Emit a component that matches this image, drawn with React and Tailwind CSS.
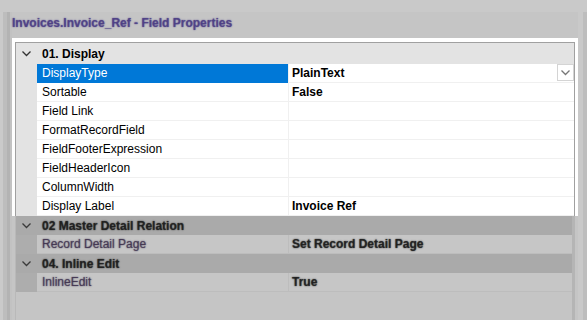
import React from 'react';

const ROWS = [
  { name: 'DisplayType', value: 'PlainText', selected: true, dropdown: true },
  { name: 'Sortable', value: 'False' },
  { name: 'Field Link', value: '' },
  { name: 'FormatRecordField', value: '' },
  { name: 'FieldFooterExpression', value: '' },
  { name: 'FieldHeaderIcon', value: '' },
  { name: 'ColumnWidth', value: '' },
  { name: 'Display Label', value: 'Invoice Ref' },
];

const DIM = [
  { category: '02 Master Detail Relation', rows: [{ name: 'Record Detail Page', value: 'Set Record Detail Page' }] },
  { category: '04. Inline Edit', rows: [{ name: 'InlineEdit', value: 'True' }] },
];

function Chevron({ color = '#333' }) {
  return (
    <svg width="9" height="6" viewBox="0 0 9 6" fill="none">
      <polyline points="0.5,0.5 4.5,4.5 8.5,0.5" stroke={color} strokeWidth="1.3" />
    </svg>
  );
}

export default function App() {
  return (
    <div className="w-[587px] h-[320px] bg-[#c5c5c5] overflow-hidden flex flex-col font-['Segoe_UI','Liberation_Sans',sans-serif] text-[12px]">
      {/* title band */}
      <div className="h-[12px] bg-[#c9c9c9]" />
      <div className="flex flex-1">
        {/* left strip */}
        <div className="w-[12px] flex">
          <div className="w-[3px] bg-[#cacaca]" />
          <div className="w-[4px] bg-[#bdbdbd]" />
          <div className="w-[3px] bg-[#b3b3b3]" />
          <div className="w-[2px] bg-[#c2c2c2]" />
        </div>

        <div className="w-[566px] flex flex-col">
          <div className="h-[26px] flex items-center">
            <span className="font-bold text-[#4a3c84]/80 [text-shadow:0_0_1.5px_#4a3c84] text-[12px] -mt-[4px]">Invoices.Invoice_Ref - Field Properties</span>
          </div>

          {/* spotlight */}
          <div className="bg-white pt-[4px] px-[3px]">
            <div className="border-t border-x border-[#a0a0a0]">
              <div className="h-[21px] bg-[#e3e3e3] flex items-center">
                <div className="w-[21px] flex justify-center"><Chevron /></div>
                <span className="pl-[5px] font-bold text-black">01. Display</span>
              </div>
              {ROWS.map(r => (
                <div key={r.name} className="h-[19px] flex">
                  <div className="w-[21px] bg-[#e3e3e3]" />
                  <div className={`w-[251px] flex items-center pl-[5px] border-b ${r.selected ? 'bg-[#0078d7] text-white border-[#0078d7]' : 'text-black border-[#f0f0f0]'}`}>
                    {r.name}
                  </div>
                  <div className="w-px bg-[#f0f0f0]" />
                  <div className="flex-1 flex items-center justify-between pl-[3px] border-b border-[#f0f0f0] font-bold text-black">
                    <span>{r.value}</span>
                    {r.dropdown && (
                      <div className="w-[17px] h-[17px] border border-[#d4d4d4] bg-white flex items-center justify-center mb-px">
                        <Chevron color="#777" />
                      </div>
                    )}
                  </div>
                </div>
              ))}
            </div>
          </div>

          {/* dimmed rest */}
          <div className="flex-1 px-[3px] flex">
            <div className="flex-1 flex flex-col border-l border-[#b9b9b9]">
              {DIM.map(g => (
                <div key={g.category}>
                  <div className="h-[19px] bg-[#aaaaaa] flex items-center">
                    <div className="w-[21px] flex justify-center"><Chevron color="#3a3a3a" /></div>
                    <span className="pl-[5px] font-bold text-[#1a1a1a]/80 [text-shadow:0_0_1.5px_#1a1a1a]">{g.category}</span>
                  </div>
                  {g.rows.map(r => (
                    <div key={r.name} className="h-[19px] flex">
                      <div className="w-[21px] bg-[#adadad]" />
                      <div className="w-[251px] bg-[#c6c6c6] flex items-center pl-[5px] border-b border-[#bdbdbd]">
                        <span className="text-[#3a2d4a]/75 [text-shadow:0_0_1.5px_#3a2d4a]">{r.name}</span>
                      </div>
                      <div className="w-px bg-[#bdbdbd]" />
                      <div className="flex-1 bg-[#c6c6c6] flex items-center pl-[3px] border-b border-[#bdbdbd]">
                        <span className="font-bold text-[#1a1a1a]/80 [text-shadow:0_0_1.5px_#1a1a1a]">{r.value}</span>
                      </div>
                    </div>
                  ))}
                </div>
              ))}
            </div>
            <div className="w-[3px] bg-[#b5b5b5]" />
          </div>
        </div>

        {/* right strip */}
        <div className="flex-1 flex">
          <div className="w-[5px] bg-[#c9c9c9]" />
          <div className="flex-1 bg-[#bdbdbd]" />
        </div>
      </div>
    </div>
  );
}
